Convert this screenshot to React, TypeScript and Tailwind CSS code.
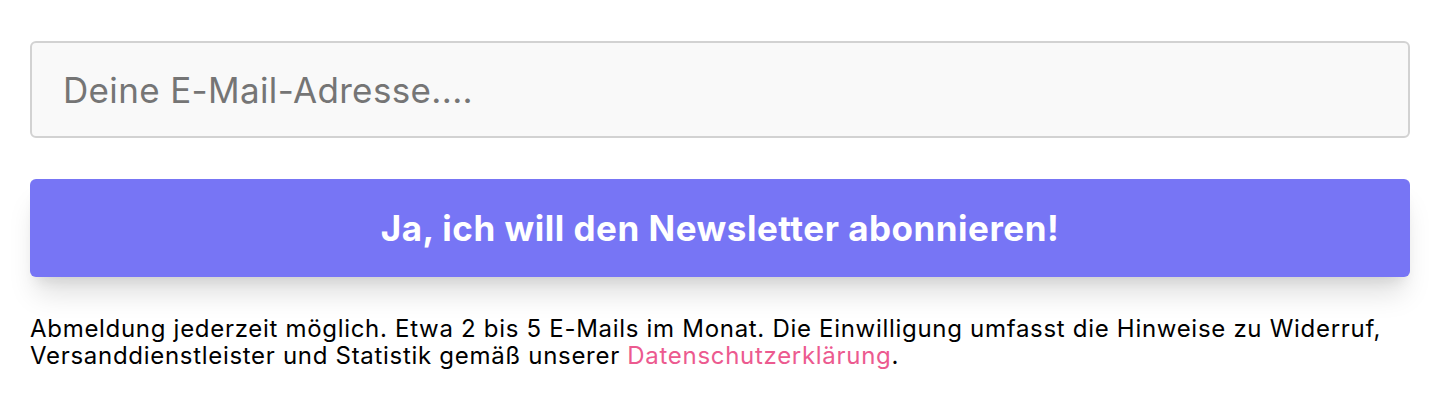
import React from "react";

export default function App() {
  return (
    <div className="w-[1444px] h-[408px] bg-white pl-[30px] pr-[34px] pt-[41px]" style={{ fontFamily: "Inter, 'Noto Sans', sans-serif" }}>
      <input
        type="email"
        placeholder="Deine E-Mail-Adresse...."
        className="block w-full h-[97px] rounded-[6px] border-2 border-[#d2d2d2] bg-[#f9f9f9] px-[31px] text-[35px] tracking-[0.35px] text-[#333] placeholder:text-[#757575] outline-none"
      />
      <button className="mt-[41px] block w-full h-[98px] rounded-[6px] bg-[#7775f5] text-white text-[35px] tracking-[0.5px] font-bold shadow-[0_22px_28px_-6px_rgba(0,0,0,0.13),0_10px_12px_-6px_rgba(0,0,0,0.08)]">
        Ja, ich will den Newsletter abonnieren!
      </button>
      <p className="mt-[38px] text-[24px] tracking-[0.7px] leading-[27px] text-black">
        Abmeldung jederzeit möglich. Etwa 2 bis 5 E-Mails im Monat. Die Einwilligung umfasst die Hinweise zu Widerruf, Versanddienstleister und Statistik gemäß unserer{" "}
        <a className="text-[#ec5a8f]" href="#">Datenschutzerklärung</a>.
      </p>
    </div>
  );
}
